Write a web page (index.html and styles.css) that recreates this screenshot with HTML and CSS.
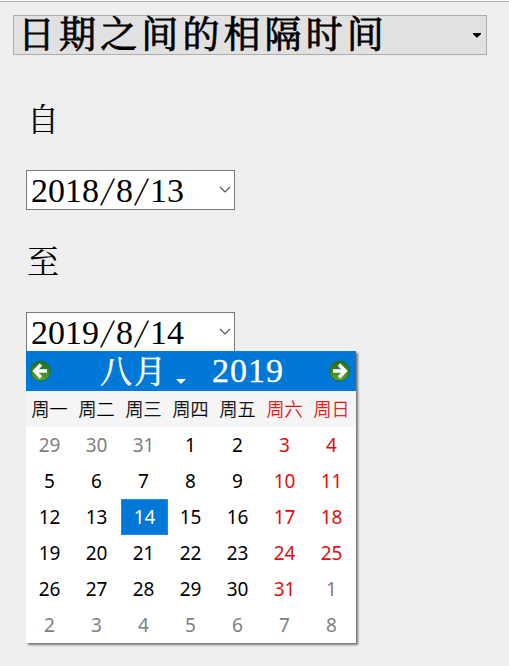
FILE: index.html
```html
<!DOCTYPE html>
<html lang="zh-CN">
<head>
<meta charset="utf-8">
<title>日期计算</title>
<link rel="stylesheet" href="styles.css">
</head>
<body>
<main class="window">
  <div class="mode"><span class="mode-text">日期之间的相隔时间</span><svg class="mode-arrow" width="8" height="5" viewBox="0 0 8 5"><path d="M0 0H8V1L4.5 4.5H3.5L0 1Z"/></svg></div>
  <div class="label from">自</div>
  <div class="field"><span class="date">2018<i>/</i>8<i>/</i>13</span><svg class="chevron" width="12" height="8" viewBox="0 0 12 8"><path d="M1 1L6 6L11 1"/></svg></div>
  <div class="label to">至</div>
  <div class="field open"><span class="date">2019<i>/</i>8<i>/</i>14</span><svg class="chevron" width="12" height="8" viewBox="0 0 12 8"><path d="M1 1L6 6L11 1"/></svg>
    <section class="calendar">
      <header class="cal-head">
        <svg class="nav" width="22" height="22" viewBox="0 0 22 22"><defs><linearGradient id="green" x2="0" y2="1"><stop stop-color="#226d20"/><stop offset=".5" stop-color="#37852b"/><stop offset="1" stop-color="#62a62e"/></linearGradient></defs><circle cx="10.5" cy="11" r="10" fill="url(#green)" stroke="#246b35"/><path d="M17 11H5M11 4.5L4.7 11L11 17.5" fill="none" stroke="#fff" stroke-width="3.4"/></svg>
        <span class="month">八月</span><svg class="month-arrow" width="10" height="6" viewBox="0 0 10 6"><path d="M0 0H10L5 5Z" fill="#fff"/></svg><span class="year">2019</span>
        <svg class="nav" width="22" height="22" viewBox="0 0 22 22"><circle cx="11.5" cy="11" r="10" fill="url(#green)" stroke="#246b35"/><path d="M5 11H17M11 4.5L17.3 11L11 17.5" fill="none" stroke="#fff" stroke-width="3.4"/></svg>
      </header>
      <div class="week"><span>周一</span><span>周二</span><span>周三</span><span>周四</span><span>周五</span><span class="red">周六</span><span class="red">周日</span></div>
      <div class="days">
        <span class="out">29</span><span class="out">30</span><span class="out">31</span><span>1</span><span>2</span><span class="red">3</span><span class="red">4</span>
        <span>5</span><span>6</span><span>7</span><span>8</span><span>9</span><span class="red">10</span><span class="red">11</span>
        <span>12</span><span>13</span><span class="selected">14</span><span>15</span><span>16</span><span class="red">17</span><span class="red">18</span>
        <span>19</span><span>20</span><span>21</span><span>22</span><span>23</span><span class="red">24</span><span class="red">25</span>
        <span>26</span><span>27</span><span>28</span><span>29</span><span>30</span><span class="red">31</span><span class="out">1</span>
        <span class="out">2</span><span class="out">3</span><span class="out">4</span><span class="out">5</span><span class="out">6</span><span class="out">7</span><span class="out">8</span>
      </div>
    </section>
  </div>
</main>
</body>
</html>
```
FILE: styles.css
```css
* { box-sizing: border-box; }
body { margin: 0; background: #efefef; color: #000; font-family: "Liberation Serif", "Noto Serif CJK SC", "Noto Sans CJK SC", serif; }
.window { height: 666px; border-top: 1px solid #fafafa; padding: 14px 22px 0 13px; overflow: hidden; background: linear-gradient(#b5b5b5, #b5b5b5) 0 0 / 100% 1px no-repeat; }
.mode { height: 40px; border: 1px solid #adadad; background: #e1e1e1; display: flex; align-items: center; justify-content: space-between; padding: 0 5px 0 4px; }
.mode-text { font-size: 37px; line-height: 36px; padding-top: 2px; letter-spacing: 4.1px; white-space: nowrap; -webkit-text-stroke: .8px #000; }
.label { height: 40px; margin-left: 14px; font-size: 32px; line-height: 40px; }
.from { margin-top: 45px; margin-bottom: 30px; }
.to { margin-top: 32px; margin-bottom: 30px; }
.field { position: relative; width: 209px; height: 40px; margin-left: 13px; border: 1px solid #7a7a7a; background: #fff; display: flex; align-items: center; justify-content: space-between; padding: 0 3px 0 4px; }
.date { font-size: 34px; line-height: 40px; white-space: nowrap; padding-top: 1px; }
.date i { display: inline-block; width: 17px; text-align: center; font-style: normal; transform: translateY(1px) skewX(-12deg) scaleY(1.18); }
.chevron { fill: none; stroke: #555; stroke-width: 1.2; }
.calendar { position: absolute; left: -1px; top: 38px; width: 330px; height: 292px; background: #fff; box-shadow: 2px 2px 2px #777; font-family: "Noto Sans", "Noto Sans CJK SC", sans-serif; }
.cal-head { height: 40px; background: #0078d7; color: #fff; display: flex; align-items: center; padding: 0 6px 0 4px; font-family: "Liberation Serif", "Noto Serif CJK SC", "Noto Sans CJK SC", serif; }
.month { margin-left: 48px; font-size: 32px; letter-spacing: 2px; line-height: 38px; padding-top: 2px; -webkit-text-stroke: .5px #fff; }
.month-arrow { margin: 22px 0 0 8px; }
.year { margin: 0 auto 0 26px; font-size: 34px; letter-spacing: 1px; line-height: 38px; -webkit-text-stroke: .3px #fff; }
.week, .days { display: grid; grid-template-columns: repeat(7, 47px); text-align: center; }
.week { height: 36px; background: #f5f5f5; font-size: 18px; line-height: 37px; font-weight: 300; padding-left: 0; -webkit-text-stroke: .3px currentColor; }
.days { grid-auto-rows: 36px; font-size: 19px; line-height: 36px; }
.red { color: #e01010; }
.out { color: #808080; }
.selected { margin: 0 -1px 0 1px; background: #0078d7; color: #fff; border: 1px dotted #c67b38; line-height: 34px; }
```
